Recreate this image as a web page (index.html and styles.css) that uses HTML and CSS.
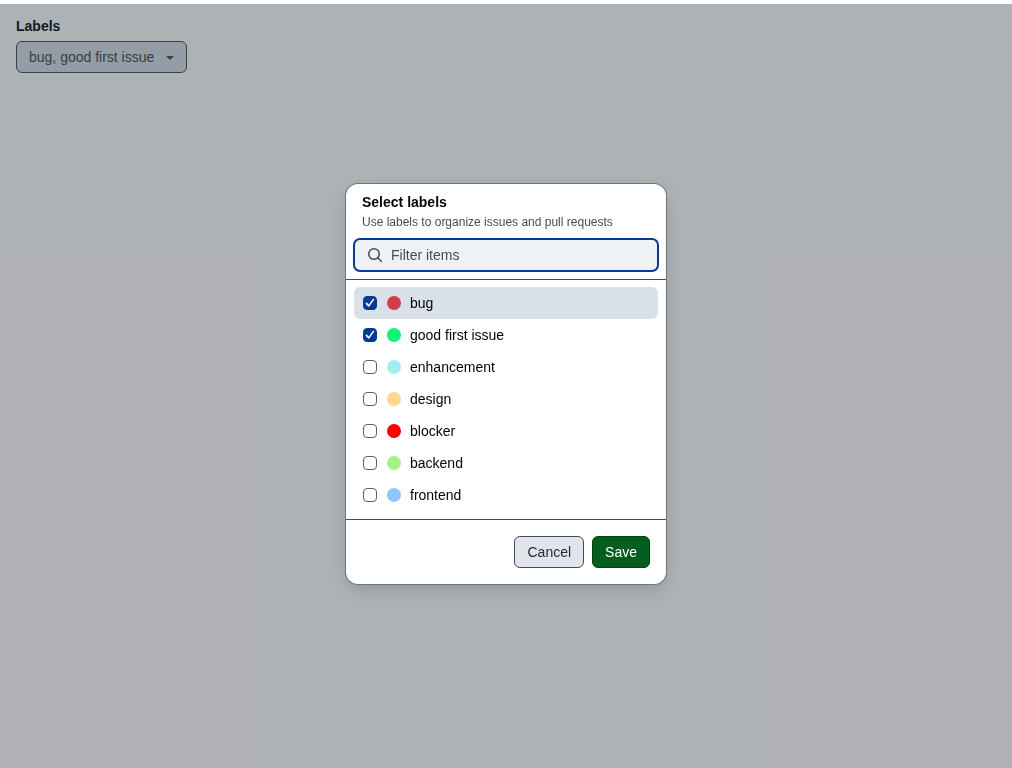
FILE: index.html
```html
<!DOCTYPE html>
<html lang="en">
<head>
<meta charset="utf-8">
<meta name="viewport" content="width=device-width, initial-scale=1">
<title>Select labels</title>
<link rel="stylesheet" href="styles.css">
</head>
<body>
<main class="page">
  <h1 class="field-title" id="field-title">Labels</h1>
  <button class="btn anchor" type="button" aria-haspopup="dialog" aria-describedby="field-title">
    <span>bug, good first issue</span>
    <svg class="icon" viewBox="0 0 16 16" aria-hidden="true"><path d="m4.427 7.427 3.396 3.396a.25.25 0 0 0 .354 0l3.396-3.396A.25.25 0 0 0 11.396 7H4.604a.25.25 0 0 0-.177.427Z"/></svg>
  </button>
</main>
<div class="overlay">
  <section class="dialog" role="dialog" aria-modal="true" aria-labelledby="dialog-title">
    <header class="dialog-header">
      <h2 class="dialog-title" id="dialog-title">Select labels</h2>
      <p class="dialog-subtitle">Use labels to organize issues and pull requests</p>
    </header>
    <div class="filter">
      <label class="filter-box">
        <svg class="icon" viewBox="0 0 16 16" aria-hidden="true"><path d="M10.68 11.74a6 6 0 0 1-7.922-8.982 6 6 0 0 1 8.982 7.922l3.04 3.04a.749.749 0 0 1-.326 1.275.749.749 0 0 1-.734-.215ZM11.5 7a4.499 4.499 0 1 0-8.997 0A4.499 4.499 0 0 0 11.5 7Z"/></svg>
        <input class="filter-input" type="text" placeholder="Filter items" aria-label="Filter items">
      </label>
    </div>
    <ul class="list">
      <li><label class="item item-active"><input class="check" type="checkbox" checked><span class="dot dot-bug"></span><span>bug</span></label></li>
      <li><label class="item"><input class="check" type="checkbox" checked><span class="dot dot-first"></span><span>good first issue</span></label></li>
      <li><label class="item"><input class="check" type="checkbox"><span class="dot dot-enhancement"></span><span>enhancement</span></label></li>
      <li><label class="item"><input class="check" type="checkbox"><span class="dot dot-design"></span><span>design</span></label></li>
      <li><label class="item"><input class="check" type="checkbox"><span class="dot dot-blocker"></span><span>blocker</span></label></li>
      <li><label class="item"><input class="check" type="checkbox"><span class="dot dot-backend"></span><span>backend</span></label></li>
      <li><label class="item"><input class="check" type="checkbox"><span class="dot dot-frontend"></span><span>frontend</span></label></li>
    </ul>
    <footer class="dialog-footer">
      <button class="btn" type="button">Cancel</button>
      <button class="btn btn-primary" type="button">Save</button>
    </footer>
  </section>
</div>
</body>
</html>
```

FILE: styles.css
```css
* {
  box-sizing: border-box;
}

body {
  margin: 0;
  padding-top: 4px;
  min-height: 100vh;
  display: flex;
  flex-direction: column;
  background: #ffffff;
  color: #010409;
  font: 14px/20px "Liberation Sans", Arial, sans-serif;
}

.page {
  flex: 1;
  padding: 12px 16px;
  background:
    linear-gradient(#b0b1b5, #b0b1b5) left 0 top 252px / 256px 100% no-repeat,
    linear-gradient(#b0b1b5, #b0b1b5) right 0 top 252px / 248px 100% no-repeat,
    #adb2b5;
}

.field-title {
  margin: 0 0 5px;
  font-size: 14px;
  line-height: 20px;
  color: #15191f;
}

.icon {
  width: 16px;
  height: 16px;
  flex: none;
  fill: currentColor;
}

.btn {
  display: inline-flex;
  align-items: center;
  height: 32px;
  padding: 0 12px;
  border: 1px solid #454c54;
  border-radius: 6px;
  background: #e0e4eb;
  color: #25292e;
  font: inherit;
}

.btn-primary {
  border-color: #04420f;
  background: #055d20;
  color: #ffffff;
}

.anchor {
  gap: 8px;
  padding: 0 8px 0 12px;
  border-color: #394047;
  background: #949ca5;
  color: #363c44;
}

.anchor .icon {
  fill: #394047;
}

.overlay {
  position: fixed;
  inset: 0;
  display: flex;
  align-items: center;
  justify-content: center;
}

.dialog {
  width: 320px;
  max-width: 90%;
  border-radius: 12px;
  background: #ffffff;
  box-shadow: 0 0 0 1px #70767c, 0 6px 12px -3px #25292e14, 0 6px 18px 0 #25292e1f;
}

.dialog-header {
  padding: 8px 16px 0;
}

.dialog-title {
  margin: 0;
  font-size: 14px;
  line-height: 20px;
}

.dialog-subtitle {
  margin: 0;
  font-size: 12px;
  line-height: 20px;
  color: #454c54;
}

.filter {
  padding: 7px 8px 8px;
  border-bottom: 1px solid #454c54;
}

.filter-box {
  display: flex;
  align-items: center;
  gap: 8px;
  height: 32px;
  padding: 0 13px;
  border-radius: 6px;
  background: #eff2f5;
  color: #454c54;
  outline: 2px solid #023b95;
  outline-offset: -1px;
}

.filter-input {
  flex: 1;
  min-width: 0;
  padding: 0;
  border: 0;
  outline: 0;
  background: transparent;
  color: #010409;
  font: inherit;
}

.filter-input::placeholder {
  color: #454c54;
  opacity: 1;
}

.list {
  margin: 0;
  padding: 7px 8px 8px;
  list-style: none;
}

.item {
  display: flex;
  align-items: center;
  gap: 9px;
  height: 32px;
  padding: 0 9px;
  border-radius: 6px;
}

.item-active {
  background: #dae0e7;
}

.check {
  appearance: none;
  width: 14px;
  height: 14px;
  margin: 0 1px 0 0;
  border: 1px solid #59636e;
  border-radius: 4px;
  background: #ffffff;
}

.check:checked {
  border-color: #023b95;
  background: #023b95 url("data:image/svg+xml,%3Csvg xmlns='http://www.w3.org/2000/svg' viewBox='0 0 12 12'%3E%3Cpath d='M2.4 6.4 4.8 8.9 9.4 2.4' fill='none' stroke='white' stroke-width='1.6' stroke-linecap='round' stroke-linejoin='round'/%3E%3C/svg%3E") center / 12px no-repeat;
}

.dot {
  width: 14px;
  height: 14px;
  border-radius: 50%;
}

.dot-bug { background: #d73a4a; }
.dot-first { background: #0cf478; }
.dot-enhancement { background: #a2eeef; }
.dot-design { background: #ffd78e; }
.dot-blocker { background: #ff0000; }
.dot-backend { background: #a4f287; }
.dot-frontend { background: #8dc6fc; }

.dialog-footer {
  display: flex;
  justify-content: flex-end;
  gap: 8px;
  padding: 16px;
  border-top: 1px solid #454c54;
}
```
